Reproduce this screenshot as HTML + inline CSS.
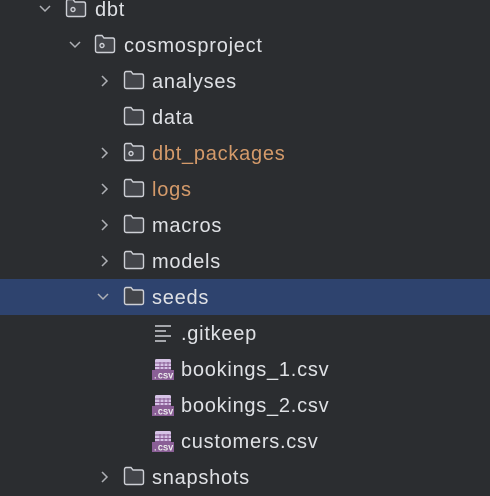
<!DOCTYPE html>
<html><head><style>
body{margin:0;width:490px;height:496px;background:#2b2d30;overflow:hidden;position:relative;font-family:"Liberation Sans",sans-serif;}
.r{position:absolute;left:0;width:490px;height:36px;}
.sel{background:#2e436e;}
.t{position:absolute;top:7px;font-size:20px;letter-spacing:0.75px;color:#dfe1e5;line-height:24px;}
.o{color:#d49a6a;}
svg{position:absolute;}
</style></head><body>
<svg width="0" height="0" style="position:absolute">
<defs>
<g id="fold"><path d="M1.5 3.5 Q1.5 1.5 3.5 1.5 H8 L10 4 H18.5 Q20.5 4 20.5 6 V16.5 Q20.5 18.5 18.5 18.5 H3.5 Q1.5 18.5 1.5 16.5 Z" fill="#43454a" stroke="#ced0d6" stroke-width="1.4"/></g>
<g id="folddot"><use href="#fold"/><circle cx="8" cy="11.5" r="2" fill="none" stroke="#ced0d6" stroke-width="1.4"/></g>
<path id="cr" d="M2 1 L7 6 L2 11" fill="none" stroke="#aeb0b5" stroke-width="1.5"/>
<path id="cd" d="M1 2 L6 7 L11 2" fill="none" stroke="#aeb0b5" stroke-width="1.5"/>
<g id="csv"><rect x="3" y="1" width="16" height="13" rx="1.5" fill="#d6c3e6"/><path d="M3 5 H19 M3 8.5 H19 M3 11.5H19 M8 4V14 M12 4V14 M16 4V14" stroke="#8a5f96" stroke-width="1"/><rect x="0" y="12" width="22" height="10" fill="#8a5f96"/><text x="11" y="20.5" font-size="8.5" font-family="Liberation Mono" fill="#eee" text-anchor="middle" font-weight="bold">.CSV</text></g>
</defs></svg>

<div class="r" style="top:-9px"><svg style="left:39px;top:13px" width="12" height="10"><use href="#cd"/></svg><svg style="left:65px;top:7px" width="22" height="20"><use href="#folddot"/></svg><span class="t" style="left:95px">dbt</span></div>
<div class="r" style="top:27px"><svg style="left:69px;top:13px" width="12" height="10"><use href="#cd"/></svg><svg style="left:94px;top:7px" width="22" height="20"><use href="#folddot"/></svg><span class="t" style="left:124px">cosmosproject</span></div>
<div class="r" style="top:63px"><svg style="left:100px;top:12px" width="10" height="12"><use href="#cr"/></svg><svg style="left:123px;top:7px" width="22" height="20"><use href="#fold"/></svg><span class="t" style="left:152px">analyses</span></div>
<div class="r" style="top:99px"><svg style="left:123px;top:7px" width="22" height="20"><use href="#fold"/></svg><span class="t" style="left:152px">data</span></div>
<div class="r" style="top:135px"><svg style="left:100px;top:12px" width="10" height="12"><use href="#cr"/></svg><svg style="left:123px;top:7px" width="22" height="20"><use href="#folddot"/></svg><span class="t o" style="left:152px">dbt_packages</span></div>
<div class="r" style="top:171px"><svg style="left:100px;top:12px" width="10" height="12"><use href="#cr"/></svg><svg style="left:123px;top:7px" width="22" height="20"><use href="#fold"/></svg><span class="t o" style="left:152px">logs</span></div>
<div class="r" style="top:207px"><svg style="left:100px;top:12px" width="10" height="12"><use href="#cr"/></svg><svg style="left:123px;top:7px" width="22" height="20"><use href="#fold"/></svg><span class="t" style="left:152px">macros</span></div>
<div class="r" style="top:243px"><svg style="left:100px;top:12px" width="10" height="12"><use href="#cr"/></svg><svg style="left:123px;top:7px" width="22" height="20"><use href="#fold"/></svg><span class="t" style="left:152px">models</span></div>
<div class="r sel" style="top:279px"><svg style="left:97px;top:13px" width="12" height="10"><use href="#cd"/></svg><svg style="left:123px;top:7px" width="22" height="20"><use href="#fold"/></svg><span class="t" style="left:152px">seeds</span></div>
<div class="r" style="top:315px"><svg style="left:154px;top:9px" width="20" height="18"><path d="M1 2H17 M1 7H12 M1 12H17 M1 17H12" stroke="#ced0d6" stroke-width="1.5"/></svg><span class="t" style="left:181px">.gitkeep</span></div>
<div class="r" style="top:351px"><svg style="left:152px;top:7px" width="23" height="23"><use href="#csv"/></svg><span class="t" style="left:181px">bookings_1.csv</span></div>
<div class="r" style="top:387px"><svg style="left:152px;top:7px" width="23" height="23"><use href="#csv"/></svg><span class="t" style="left:181px">bookings_2.csv</span></div>
<div class="r" style="top:423px"><svg style="left:152px;top:7px" width="23" height="23"><use href="#csv"/></svg><span class="t" style="left:181px">customers.csv</span></div>
<div class="r" style="top:459px"><svg style="left:100px;top:12px" width="10" height="12"><use href="#cr"/></svg><svg style="left:123px;top:7px" width="22" height="20"><use href="#fold"/></svg><span class="t" style="left:152px">snapshots</span></div>
</body></html>
